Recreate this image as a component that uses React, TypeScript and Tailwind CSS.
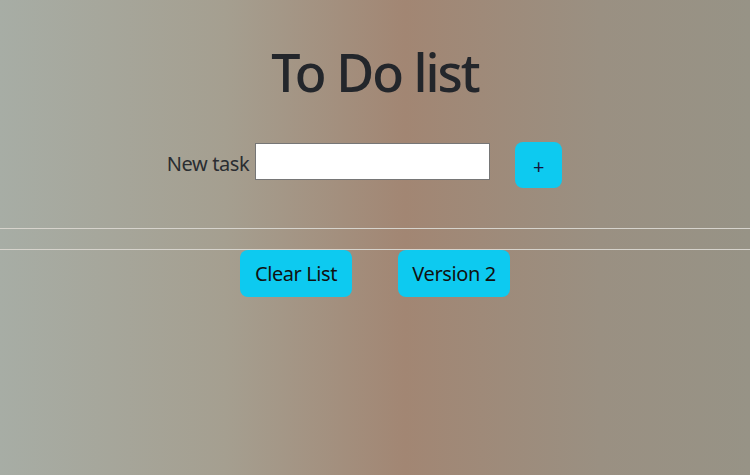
import React from "react";

export default function App() {
  return (
    <div
      className="w-full h-[475px] overflow-hidden bg-[linear-gradient(to_right,#a7ada5_0%,#a59f90_30%,#a28673_54%,#9a9082_80%,#979386_100%)] text-[#212529]"
      style={{ fontFamily: '"Noto Sans", "Open Sans", sans-serif' }}
    >
      <h1 className="pt-[41px] text-center text-[52px] leading-[62px] font-medium tracking-[-2px] text-[#23262b]">
        To Do list
      </h1>
      <div className="mt-[39px] flex items-start justify-center pr-[21px]">
        <label className="mt-[8px] text-[20px] leading-[28px] text-[#2a2d31] tracking-[-0.4px]">New task</label>
        <input
          type="text"
          className="ml-[6px] mt-[1px] h-[37px] w-[235px] bg-white border border-[#767676] outline-none"
        />
        <button className="ml-[25px] h-[46px] w-[47px] rounded-[8px] bg-[#0dcaf0] flex items-center justify-center pt-[3px]">
          <span className="text-[20px] leading-none text-[#14143c]">+</span>
        </button>
      </div>
      <div className="mt-[40px] h-px bg-[#d6d3cc]" />
      <div className="mt-[20px] h-px bg-[#d6d3cc]" />
      <div className="flex justify-center gap-[46px]">
        <button className="h-[47px] w-[112px] rounded-[8px] bg-[#0dcaf0] text-[20px] text-[#111] tracking-[-0.4px]">
          Clear List
        </button>
        <button className="h-[47px] w-[112px] rounded-[8px] bg-[#0dcaf0] text-[20px] text-[#111] tracking-[-0.4px]">
          Version 2
        </button>
      </div>
    </div>
  );
}
